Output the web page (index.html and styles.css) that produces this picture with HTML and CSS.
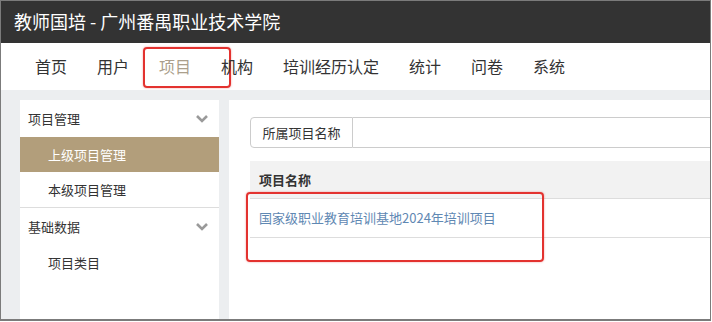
FILE: index.html
```html
<!DOCTYPE html>
<html lang="zh-CN">
<head>
    <meta charset="UTF-8">
    <meta name="viewport" content="width=device-width, initial-scale=1.0">
    <title>教师国培 - 广州番禺职业技术学院</title>
    <link rel="stylesheet" href="styles.css">
</head>
<body>
<div class="frame">

    <!-- Title bar -->
    <div class="topbar">教师国培 - 广州番禺职业技术学院</div>

    <!-- Main menu -->
    <div class="navbar">
        <a href="#">首页</a>
        <a href="#">用户</a>
        <a href="#" class="active">项目<span class="mark"></span></a>
        <a href="#">机构</a>
        <a href="#">培训经历认定</a>
        <a href="#">统计</a>
        <a href="#">问卷</a>
        <a href="#">系统</a>
    </div>

    <div class="content">
        <!-- Side menu -->
        <div class="sidebar">
            <div class="menu-group">
                <div class="menu-title">项目管理
                    <svg class="chevron" width="14" height="9" viewBox="0 0 14 9"><polyline points="2,2 7,7 12,2" fill="none" stroke="#9a9a9a" stroke-width="2.6"/></svg>
                </div>
                <a href="#" class="menu-item selected">上级项目管理</a>
                <a href="#" class="menu-item">本级项目管理</a>
            </div>
            <div class="menu-group">
                <div class="menu-title">基础数据
                    <svg class="chevron" width="14" height="9" viewBox="0 0 14 9"><polyline points="2,2 7,7 12,2" fill="none" stroke="#9a9a9a" stroke-width="2.6"/></svg>
                </div>
                <a href="#" class="menu-item">项目类目</a>
            </div>
        </div>

        <!-- Project list -->
        <div class="main">
            <div class="search-group">
                <span class="addon">所属项目名称</span>
                <input type="text" class="search-input">
            </div>

            <div class="table-wrap">
                <table class="list-table">
                    <thead>
                        <tr><th>项目名称</th></tr>
                    </thead>
                    <tbody>
                        <tr><td><a href="#">国家级职业教育培训基地2024年培训项目</a></td></tr>
                    </tbody>
                </table>
                <span class="mark mark-row"></span>
            </div>
        </div>
    </div>

</div>
</body>
</html>
```

FILE: styles.css
```css
/* General Styles */
body {
    margin: 0;
    padding: 0;
    background-color: #fff;
    font-family: "Noto Sans CJK SC", "Liberation Sans", sans-serif;
    color: #333;
}

.frame {
    width: 711px;
    height: 321px;
    box-sizing: border-box;
    border: 1px solid #7b7b7b;
    border-bottom-width: 2px;
    overflow: hidden;
    display: flex;
    flex-direction: column;
}

/* Title bar */
.topbar {
    height: 42px;
    line-height: 40px;
    padding-left: 13px;
    background-color: #333;
    color: #fff;
    font-size: 18px;
    flex-shrink: 0;
}

/* Navbar */
.navbar {
    height: 47px;
    display: flex;
    padding-left: 19px;
    background-color: #fff;
    flex-shrink: 0;
}

.navbar a {
    position: relative;
    padding: 0 15px;
    line-height: 46px;
    font-size: 16px;
    color: #333;
    text-decoration: none;
}

.navbar a.active {
    color: #ab9f8c;
}

/* red annotation boxes */
.mark {
    position: absolute;
    border: 2px solid #e3322f;
    border-radius: 4px;
    box-shadow: 0 0 2px rgba(227, 50, 47, 0.5);
}

.navbar .mark {
    left: -1px;
    right: -25px;
    top: 4px;
    bottom: 2px;
}

/* Content */
.content {
    flex: 1;
    display: flex;
    gap: 10px;
    padding: 10px 0 0 19px;
    background-color: #eceef0;
    min-height: 0;
}

.sidebar {
    width: 199px;
    background-color: #fff;
    flex-shrink: 0;
    font-size: 13px;
}

.menu-group {
    border-bottom: 1px solid #ddd;
}

.menu-group:last-child {
    border-bottom: none;
}

.menu-title {
    height: 37px;
    line-height: 36px;
    padding-left: 8px;
    display: flex;
    align-items: center;
    justify-content: space-between;
    padding-right: 10px;
}

.menu-item {
    display: block;
    height: 35px;
    line-height: 35px;
    padding-left: 28px;
    color: #333;
    text-decoration: none;
}

.menu-item.selected {
    background-color: #b29e7b;
    color: #fff;
}

.main {
    flex: 1;
    background-color: #fff;
    padding: 17px 0 0 21px;
    overflow: hidden;
}

/* Search */
.search-group {
    display: flex;
    width: 520px;
    height: 31px;
}

.addon {
    width: 103px;
    box-sizing: border-box;
    border: 1px solid #ccc;
    border-radius: 4px 0 0 4px;
    text-align: center;
    line-height: 29px;
    font-size: 13px;
    background-color: #fff;
}

.search-input {
    flex: 1;
    height: 31px;
    box-sizing: border-box;
    border: 1px solid #ccc;
    border-left: none;
    padding: 0 10px;
    outline: none;
}

/* Table */
.table-wrap {
    position: relative;
    margin-top: 13px;
}

.list-table {
    width: 520px;
    border-collapse: collapse;
    font-size: 13px;
}

.list-table th {
    background-color: #f2f2f2;
    font-weight: bold;
    text-align: left;
    padding: 9px 9px;
    line-height: 19px;
    border-bottom: 1px solid #ddd;
}

.list-table td {
    padding: 9px 9px;
    line-height: 20px;
    border-bottom: 1px solid #ddd;
}

.list-table td a {
    color: #5f88b3;
    text-decoration: none;
}

.mark-row {
    left: -4px;
    top: 31px;
    width: 294px;
    height: 66px;
}
```
